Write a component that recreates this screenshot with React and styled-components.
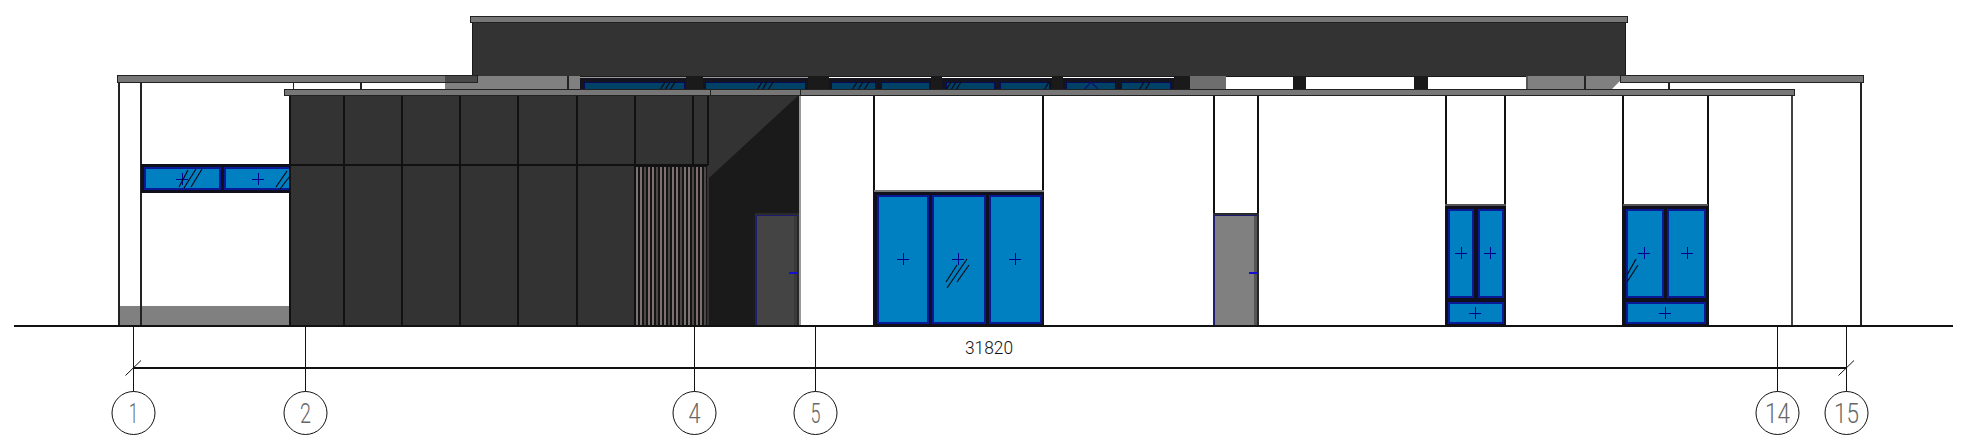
import React from 'react';
import styled, { createGlobalStyle } from 'styled-components';

const GlobalStyle = createGlobalStyle`
  html, body {
    margin: 0;
    padding: 0;
    background: #fff;
  }
`;

const Sheet = styled.main`
  width: 1969px;
  height: 444px;
  overflow: hidden;
  background: #fff;
`;

const Drawing = styled.svg`
  display: block;
  width: 100%;
  height: 100%;
`;

const Block = styled.rect`
  fill: ${(p) => p.$fill || '#333'};
  stroke: ${(p) => p.$stroke || 'none'};
  stroke-width: ${(p) => p.$weight || 1};
  shape-rendering: crispEdges;
`;

const Facet = styled.polygon`
  fill: ${(p) => p.$fill};
  shape-rendering: geometricPrecision;
`;

const Edge = styled.line`
  stroke: ${(p) => p.$color || '#111'};
  stroke-width: ${(p) => p.$weight || 2};
  shape-rendering: crispEdges;
`;

const Slash = styled.line`
  stroke: ${(p) => p.$color || '#0a0a14'};
  stroke-width: ${(p) => p.$weight || 1.2};
`;

const Balloon = styled.circle`
  fill: #fff;
  stroke: #111;
  stroke-width: 1;
`;

const GridLabel = styled.text`
  font-family: Roboto, 'Liberation Sans', sans-serif;
  font-size: 27px;
  font-weight: 300;
  fill: #666;
  text-anchor: middle;
`;

const DimLabel = styled.text`
  font-family: Roboto, 'Liberation Sans', sans-serif;
  font-size: 18px;
  font-weight: 300;
  fill: #111;
  text-anchor: middle;
`;

const PANEL_X = [344, 402, 460, 518, 577];
const GRIDS = [
  { label: '1', x: 133, w: 9 },
  { label: '2', x: 305, w: 11 },
  { label: '4', x: 694, w: 12 },
  { label: '5', x: 815, w: 10 },
  { label: '14', x: 1777, w: 25 },
  { label: '15', x: 1846, w: 25 },
];
const WALL_X = [874, 1043, 1214, 1258, 1446, 1505, 1623, 1708];

// x ranges of the strip between the upper box and the lower roof
const RIBBON_FRAMES = [
  {
    x1: 580,
    x2: 686,
    panes: [[584, 684]],
    hatch: [660, 665, 670],
  },
  {
    x1: 703,
    x2: 808,
    panes: [[705, 805]],
    hatch: [757, 762, 768],
  },
  {
    x1: 829,
    x2: 931,
    panes: [
      [831, 875],
      [881, 929],
    ],
    hatch: [852, 858, 864],
  },
  {
    x1: 942,
    x2: 1052,
    panes: [
      [946, 994],
      [1000, 1049],
    ],
    hatch: [946, 951, 956, 1044],
  },
  {
    x1: 1063,
    x2: 1174,
    panes: [
      [1066, 1115],
      [1121, 1170],
    ],
    hatch: [1139, 1145],
  },
];
const RIBBON_PILLARS = [
  [686, 703],
  [808, 829],
  [931, 942],
  [1052, 1063],
  [1174, 1190],
  [1293, 1306],
  [1414, 1428],
];

const Cross = ({ x, y }) => (
  <g>
    <Edge x1={x - 6} y1={y} x2={x + 6} y2={y} $color="#00008c" $weight={1} />
    <Edge x1={x} y1={y - 6} x2={x} y2={y + 6} $color="#00008c" $weight={1} />
  </g>
);

const Pane = ({ x1, y1, x2, y2 }) => (
  <Block x={x1} y={y1} width={x2 - x1} height={y2 - y1} $fill="#0080c0" $stroke="#0a1a96" $weight={2} />
);

const GlassWindow = ({ box, panes, crosses = [], slashes = [] }) => (
  <g>
    <Block x={box[0]} y={box[1]} width={box[2] - box[0]} height={box[3] - box[1]} $fill="#10101c" />
    {panes.map((p, i) => (
      <Pane key={i} x1={p[0]} y1={p[1]} x2={p[2]} y2={p[3]} />
    ))}
    {crosses.map((c, i) => (
      <Cross key={i} x={c[0]} y={c[1]} />
    ))}
    {slashes.map((s, i) => (
      <Slash key={i} x1={s[0]} y1={s[1]} x2={s[2]} y2={s[3]} />
    ))}
  </g>
);

const Door = ({ x, width, fill, shade }) => (
  <g>
    <Block x={x} y={213} width={width} height={113} $fill="#2a2a2a" />
    <Block x={x + 1.5} y={215.5} width={width - 3} height={110} $fill={fill} $stroke="#1c1c70" />
    <Block x={x + width - 5} y={216} width={3} height={109} $fill={shade} />
    <Edge x1={x + width - 10} y1={272.5} x2={x + width - 1} y2={272.5} $color="#1010d0" $weight={2} />
  </g>
);

const Roof = ({ x, y, width, height = 7, fill = '#777' }) => (
  <Block x={x + 0.5} y={y + 0.5} width={width} height={height} $fill={fill} $stroke="#222" $weight={1.5} />
);

const Ribbon = () => (
  <g>
    <Block x={445} y={76} width={123} height={14} $fill="#808080" />
    <Edge x1={568} y1={76} x2={568} y2={90} $color="#222" />
    <Block x={569} y={76} width={11} height={14} $fill="#808080" />
    {RIBBON_FRAMES.map((f) => (
      <g key={f.x1}>
        <Block x={f.x1} y={78} width={f.x2 - f.x1} height={12} $fill="#14141e" />
        {f.panes.map((p) => (
          <Block
            key={p[0]}
            x={p[0] + 0.5}
            y={82.5}
            width={p[1] - p[0]}
            height={8}
            $fill="#004266"
            $stroke="#0a0a5a"
          />
        ))}
        {f.hatch.map((h) => (
          <Slash key={h} x1={h} y1={90} x2={h + 5} y2={82} />
        ))}
      </g>
    ))}
    <Edge x1={580} y1={77} x2={686} y2={77} $color="#999" $weight={1} />
    <Edge x1={703} y1={77} x2={808} y2={77} $color="#999" $weight={1} />
    <Slash x1={1084} y1={90} x2={1091} y2={82} $color="#10106e" />
    <Slash x1={1091} y1={82} x2={1099} y2={90} $color="#10106e" />
    {RIBBON_PILLARS.map((p) => (
      <Block key={p[0]} x={p[0]} y={76} width={p[1] - p[0]} height={14} $fill="#1a1a1a" />
    ))}
    <Block x={1190} y={76} width={36} height={14} $fill="#6e6e6e" />
    <Block x={1527} y={76} width={58} height={14} $fill="#808080" />
    <Edge x1={1527} y1={76} x2={1527} y2={90} $color="#555" />
    <Edge x1={1585} y1={76} x2={1585} y2={90} $color="#222" />
    <Facet points="1586,76 1621,76 1621,80 1611,90 1586,90" $fill="#808080" />
    <Edge x1={293} y1={82} x2={293} y2={90} $color="#222" $weight={1} />
    <Edge x1={361} y1={82} x2={361} y2={90} $color="#222" />
    <Edge x1={1669} y1={82} x2={1669} y2={90} $color="#222" />
  </g>
);

const DarkWing = () => {
  const stripes = [];
  for (let x = 636, i = 0; x < 706; x += 4, i++) {
    stripes.push({ x, tone: i % 3 === 2 ? '#4e4848' : '#7c7070' });
  }

  return (
    <g>
      <Block x={290} y={95} width={419} height={231} $fill="#333" />
      <Block x={709} y={95} width={91} height={231} $fill="#1a1a1a" />
      <Facet points="709,95 799,95 709,178" $fill="#333" />
      <Block x={635} y={166} width={72} height={160} $fill="#141414" />
      {stripes.map((s) => (
        <Block key={s.x} x={s.x} y={167} width={2} height={159} $fill={s.tone} />
      ))}
      {PANEL_X.map((x) => (
        <Edge key={x} x1={x} y1={95} x2={x} y2={326} />
      ))}
      <Edge x1={635} y1={95} x2={635} y2={326} />
      <Edge x1={693} y1={95} x2={693} y2={165} />
      <Edge x1={290} y1={95} x2={290} y2={326} />
      <Edge x1={708} y1={95} x2={708} y2={165} />
      <Edge x1={290} y1={165} x2={708} y2={165} />
      <Door x={755} width={44} fill="#444" shade="#3a3a3a" />
      <Edge x1={800} y1={95} x2={800} y2={326} $color="#999" />
    </g>
  );
};

const LeftBay = () => (
  <g>
    <Block x={120} y={306} width={171} height={20} $fill="#808080" />
    <Edge x1={119} y1={82} x2={119} y2={326} $color="#222" />
    <Edge x1={141} y1={82} x2={141} y2={326} $color="#222" />
    <GlassWindow
      box={[141, 164, 290, 193]}
      panes={[
        [145, 168, 220, 189],
        [225, 168, 292, 189],
      ]}
      crosses={[
        [182, 179],
        [258, 179],
      ]}
      slashes={[
        [179, 187, 188, 170],
        [184, 188, 196, 169],
        [191, 187, 202, 169],
        [276, 187, 287, 171],
        [280, 189, 290, 176],
      ]}
    />
  </g>
);

const GlazedFront = () => (
  <g>
    {WALL_X.map((x) => (
      <Edge key={x} x1={x} y1={95} x2={x} y2={326} />
    ))}
    <Edge x1={1792} y1={95} x2={1792} y2={326} $color="#444" />
    <Edge x1={1861} y1={82} x2={1861} y2={326} $color="#222" />
    <Edge x1={874} y1={191} x2={1044} y2={191} $color="#777" />
    <GlassWindow
      box={[874, 192, 1044, 326]}
      panes={[
        [878, 196, 928, 323],
        [933, 196, 985, 323],
        [990, 196, 1041, 323],
      ]}
      crosses={[
        [903, 259],
        [958, 259],
        [1015, 259],
      ]}
      slashes={[
        [946, 282, 957, 265],
        [947, 288, 967, 259],
        [957, 282, 969, 265],
      ]}
    />
    <Door x={1213} width={46} fill="#808080" shade="#555" />
    <Edge x1={1445} y1={205} x2={1506} y2={205} $color="#555" />
    <GlassWindow
      box={[1445, 206, 1506, 326]}
      panes={[
        [1449, 210, 1473, 297],
        [1479, 210, 1503, 297],
        [1449, 303, 1503, 323],
      ]}
      crosses={[
        [1461, 253],
        [1490, 253],
        [1475, 313],
      ]}
    />
    <Edge x1={1623} y1={205} x2={1708} y2={205} $color="#555" />
    <GlassWindow
      box={[1623, 206, 1708, 326]}
      panes={[
        [1627, 210, 1663, 297],
        [1668, 210, 1705, 297],
        [1627, 303, 1705, 323],
      ]}
      crosses={[
        [1644, 253],
        [1687, 253],
        [1665, 313],
      ]}
      slashes={[
        [1627, 275, 1636, 259],
        [1627, 282, 1638, 265],
      ]}
    />
  </g>
);

const GridMark = ({ label, x, w }) => (
  <g>
    <Edge x1={x + 0.5} y1={327} x2={x + 0.5} y2={392} $weight={1} />
    <Balloon cx={x + 0.5} cy={413} r={21.5} />
    <GridLabel x={x + 0.5} y={423} textLength={w} lengthAdjust="spacingAndGlyphs">
      {label}
    </GridLabel>
  </g>
);

const App = () => (
  <Sheet>
    <GlobalStyle />
    <Drawing viewBox="0 0 1969 444" xmlns="http://www.w3.org/2000/svg">
      <Block x={472.5} y={22.5} width={1153} height={54} $fill="#333" $stroke="#1a1a1a" $weight={1.5} />
      <Roof x={470} y={16} width={1157} height={6} />
      <Ribbon />
      <Roof x={117} y={75} width={360} />
      <Block x={445} y={76} width={32} height={6} $fill="#484848" />
      <Roof x={1620} y={75} width={243} />

      <LeftBay />
      <GlazedFront />
      <DarkWing />

      <Roof x={284} y={89} width={1510} height={6} />
      <Edge x1={710} y1={89} x2={710} y2={95} $color="#222" $weight={1} />
      <Edge x1={800} y1={89} x2={800} y2={95} $color="#222" $weight={1} />

      <Edge x1={14} y1={326} x2={1953} y2={326} $weight={2} />
      {GRIDS.map((g) => (
        <GridMark key={g.label} {...g} />
      ))}
      <Edge x1={133} y1={368} x2={1847} y2={368} $weight={1.5} />
      <Slash x1={125.5} y1={375.5} x2={141} y2={360.5} $color="#111" $weight={1} />
      <Slash x1={1838.5} y1={375.5} x2={1854} y2={360.5} $color="#111" $weight={1} />
      <DimLabel x={989} y={354} textLength={48} lengthAdjust="spacingAndGlyphs">
        31820
      </DimLabel>
    </Drawing>
  </Sheet>
);

export default App;
